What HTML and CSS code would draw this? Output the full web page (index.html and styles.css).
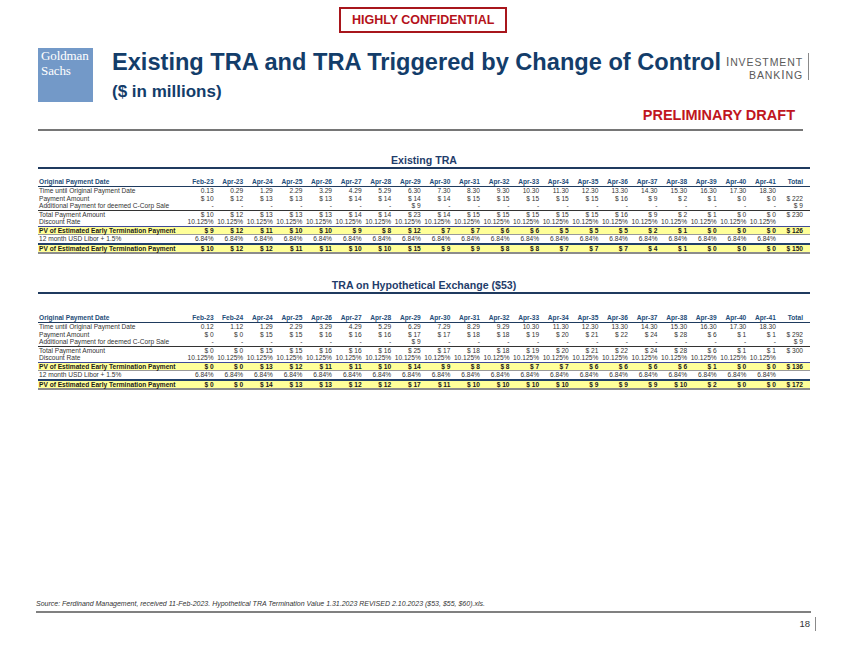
FILE: index.html
```html
<!DOCTYPE html>
<html lang="en">
<head>
<meta charset="utf-8">
<title>Existing TRA and TRA Triggered by Change of Control</title>
<link rel="stylesheet" href="styles.css">
</head>
<body>
<div class="page">
  <div class="conf-row"><div class="conf">HIGHLY CONFIDENTIAL</div></div>
  <header class="header">
    <div class="logo"><span class="logo-text">Goldman<br>Sachs</span></div>
    <div class="titles">
      <h1 class="title">Existing TRA and TRA Triggered by Change of Control</h1>
      <div class="subtitle">($ in millions)</div>
    </div>
    <div class="brand"><div><span class="tall">I</span>NVESTMENT</div><div>BANK<span class="tall">I</span>NG</div></div>
  </header>
  <div class="draft">PRELIMINARY DRAFT</div>
  <div class="rule"></div>

  <section class="sec sec-1">
    <div class="sec-title">Existing TRA</div>
    <table class="tbl">
      <colgroup><col class="c-label"><col span="20" class="c-num"><col class="c-total"></colgroup>
      <thead>
        <tr class="hdr"><th class="lbl">Original Payment Date</th><th>Feb-23</th><th>Apr-23</th><th>Apr-24</th><th>Apr-25</th><th>Apr-26</th><th>Apr-27</th><th>Apr-28</th><th>Apr-29</th><th>Apr-30</th><th>Apr-31</th><th>Apr-32</th><th>Apr-33</th><th>Apr-34</th><th>Apr-35</th><th>Apr-36</th><th>Apr-37</th><th>Apr-38</th><th>Apr-39</th><th>Apr-40</th><th>Apr-41</th><th class="tot">Total</th></tr>
      </thead>
      <tbody>
        <tr><td class="lbl">Time until Original Payment Date</td><td>0.13</td><td>0.29</td><td>1.29</td><td>2.29</td><td>3.29</td><td>4.29</td><td>5.29</td><td>6.30</td><td>7.30</td><td>8.30</td><td>9.30</td><td>10.30</td><td>11.30</td><td>12.30</td><td>13.30</td><td>14.30</td><td>15.30</td><td>16.30</td><td>17.30</td><td>18.30</td><td class="tot"></td></tr>
        <tr><td class="lbl">Payment Amount</td><td>$ 10</td><td>$ 12</td><td>$ 13</td><td>$ 13</td><td>$ 13</td><td>$ 14</td><td>$ 14</td><td>$ 14</td><td>$ 14</td><td>$ 15</td><td>$ 15</td><td>$ 15</td><td>$ 15</td><td>$ 15</td><td>$ 16</td><td>$ 9</td><td>$ 2</td><td>$ 1</td><td>$ 0</td><td>$ 0</td><td class="tot">$ 222</td></tr>
        <tr><td class="lbl">Additional Payment for deemed C-Corp Sale</td><td>-</td><td>-</td><td>-</td><td>-</td><td>-</td><td>-</td><td>-</td><td>$ 9</td><td>-</td><td>-</td><td>-</td><td>-</td><td>-</td><td>-</td><td>-</td><td>-</td><td>-</td><td>-</td><td>-</td><td>-</td><td class="tot">$ 9</td></tr>
        <tr class="r-total"><td class="lbl">Total Payment Amount</td><td>$ 10</td><td>$ 12</td><td>$ 13</td><td>$ 13</td><td>$ 13</td><td>$ 14</td><td>$ 14</td><td>$ 23</td><td>$ 14</td><td>$ 15</td><td>$ 15</td><td>$ 15</td><td>$ 15</td><td>$ 15</td><td>$ 16</td><td>$ 9</td><td>$ 2</td><td>$ 1</td><td>$ 0</td><td>$ 0</td><td class="tot">$ 230</td></tr>
        <tr><td class="lbl">Discount Rate</td><td>10.125%</td><td>10.125%</td><td>10.125%</td><td>10.125%</td><td>10.125%</td><td>10.125%</td><td>10.125%</td><td>10.125%</td><td>10.125%</td><td>10.125%</td><td>10.125%</td><td>10.125%</td><td>10.125%</td><td>10.125%</td><td>10.125%</td><td>10.125%</td><td>10.125%</td><td>10.125%</td><td>10.125%</td><td>10.125%</td><td class="tot"></td></tr>
        <tr class="r-pv"><td class="lbl">PV of Estimated Early Termination Payment</td><td>$ 9</td><td>$ 12</td><td>$ 11</td><td>$ 10</td><td>$ 10</td><td>$ 9</td><td>$ 8</td><td>$ 12</td><td>$ 7</td><td>$ 7</td><td>$ 6</td><td>$ 6</td><td>$ 5</td><td>$ 5</td><td>$ 5</td><td>$ 2</td><td>$ 1</td><td>$ 0</td><td>$ 0</td><td>$ 0</td><td class="tot">$ 126</td></tr>
        <tr class="r-libor"><td class="lbl">12 month USD Libor + 1.5%</td><td>6.84%</td><td>6.84%</td><td>6.84%</td><td>6.84%</td><td>6.84%</td><td>6.84%</td><td>6.84%</td><td>6.84%</td><td>6.84%</td><td>6.84%</td><td>6.84%</td><td>6.84%</td><td>6.84%</td><td>6.84%</td><td>6.84%</td><td>6.84%</td><td>6.84%</td><td>6.84%</td><td>6.84%</td><td>6.84%</td><td class="tot"></td></tr>
        <tr class="r-pv2"><td class="lbl">PV of Estimated Early Termination Payment</td><td>$ 10</td><td>$ 12</td><td>$ 12</td><td>$ 11</td><td>$ 11</td><td>$ 10</td><td>$ 10</td><td>$ 15</td><td>$ 9</td><td>$ 9</td><td>$ 8</td><td>$ 8</td><td>$ 7</td><td>$ 7</td><td>$ 7</td><td>$ 4</td><td>$ 1</td><td>$ 0</td><td>$ 0</td><td>$ 0</td><td class="tot">$ 150</td></tr>
      </tbody>
    </table>
  </section>

  <section class="sec sec-2">
    <div class="sec-title">TRA on Hypothetical Exchange ($53)</div>
    <table class="tbl">
      <colgroup><col class="c-label"><col span="20" class="c-num"><col class="c-total"></colgroup>
      <thead>
        <tr class="hdr"><th class="lbl">Original Payment Date</th><th>Feb-23</th><th>Feb-24</th><th>Apr-24</th><th>Apr-25</th><th>Apr-26</th><th>Apr-27</th><th>Apr-28</th><th>Apr-29</th><th>Apr-30</th><th>Apr-31</th><th>Apr-32</th><th>Apr-33</th><th>Apr-34</th><th>Apr-35</th><th>Apr-36</th><th>Apr-37</th><th>Apr-38</th><th>Apr-39</th><th>Apr-40</th><th>Apr-41</th><th class="tot">Total</th></tr>
      </thead>
      <tbody>
        <tr><td class="lbl">Time until Original Payment Date</td><td>0.12</td><td>1.12</td><td>1.29</td><td>2.29</td><td>3.29</td><td>4.29</td><td>5.29</td><td>6.29</td><td>7.29</td><td>8.29</td><td>9.29</td><td>10.30</td><td>11.30</td><td>12.30</td><td>13.30</td><td>14.30</td><td>15.30</td><td>16.30</td><td>17.30</td><td>18.30</td><td class="tot"></td></tr>
        <tr><td class="lbl">Payment Amount</td><td>$ 0</td><td>$ 0</td><td>$ 15</td><td>$ 15</td><td>$ 16</td><td>$ 16</td><td>$ 16</td><td>$ 17</td><td>$ 17</td><td>$ 18</td><td>$ 18</td><td>$ 19</td><td>$ 20</td><td>$ 21</td><td>$ 22</td><td>$ 24</td><td>$ 28</td><td>$ 6</td><td>$ 1</td><td>$ 1</td><td class="tot">$ 292</td></tr>
        <tr><td class="lbl">Additional Payment for deemed C-Corp Sale</td><td>-</td><td>-</td><td>-</td><td>-</td><td>-</td><td>-</td><td>-</td><td>$ 9</td><td>-</td><td>-</td><td>-</td><td>-</td><td>-</td><td>-</td><td>-</td><td>-</td><td>-</td><td>-</td><td>-</td><td>-</td><td class="tot">$ 9</td></tr>
        <tr class="r-total"><td class="lbl">Total Payment Amount</td><td>$ 0</td><td>$ 0</td><td>$ 15</td><td>$ 15</td><td>$ 16</td><td>$ 16</td><td>$ 16</td><td>$ 25</td><td>$ 17</td><td>$ 18</td><td>$ 18</td><td>$ 19</td><td>$ 20</td><td>$ 21</td><td>$ 22</td><td>$ 24</td><td>$ 28</td><td>$ 6</td><td>$ 1</td><td>$ 1</td><td class="tot">$ 300</td></tr>
        <tr><td class="lbl">Discount Rate</td><td>10.125%</td><td>10.125%</td><td>10.125%</td><td>10.125%</td><td>10.125%</td><td>10.125%</td><td>10.125%</td><td>10.125%</td><td>10.125%</td><td>10.125%</td><td>10.125%</td><td>10.125%</td><td>10.125%</td><td>10.125%</td><td>10.125%</td><td>10.125%</td><td>10.125%</td><td>10.125%</td><td>10.125%</td><td>10.125%</td><td class="tot"></td></tr>
        <tr class="r-pv"><td class="lbl">PV of Estimated Early Termination Payment</td><td>$ 0</td><td>$ 0</td><td>$ 13</td><td>$ 12</td><td>$ 11</td><td>$ 11</td><td>$ 10</td><td>$ 14</td><td>$ 9</td><td>$ 8</td><td>$ 8</td><td>$ 7</td><td>$ 7</td><td>$ 6</td><td>$ 6</td><td>$ 6</td><td>$ 6</td><td>$ 1</td><td>$ 0</td><td>$ 0</td><td class="tot">$ 136</td></tr>
        <tr class="r-libor"><td class="lbl">12 month USD Libor + 1.5%</td><td>6.84%</td><td>6.84%</td><td>6.84%</td><td>6.84%</td><td>6.84%</td><td>6.84%</td><td>6.84%</td><td>6.84%</td><td>6.84%</td><td>6.84%</td><td>6.84%</td><td>6.84%</td><td>6.84%</td><td>6.84%</td><td>6.84%</td><td>6.84%</td><td>6.84%</td><td>6.84%</td><td>6.84%</td><td>6.84%</td><td class="tot"></td></tr>
        <tr class="r-pv2"><td class="lbl">PV of Estimated Early Termination Payment</td><td>$ 0</td><td>$ 0</td><td>$ 14</td><td>$ 13</td><td>$ 13</td><td>$ 12</td><td>$ 12</td><td>$ 17</td><td>$ 11</td><td>$ 10</td><td>$ 10</td><td>$ 10</td><td>$ 10</td><td>$ 9</td><td>$ 9</td><td>$ 9</td><td>$ 10</td><td>$ 2</td><td>$ 0</td><td>$ 0</td><td class="tot">$ 172</td></tr>
      </tbody>
    </table>
  </section>

  <footer class="footer">
    <p class="source">Source: Ferdinand Management, received 11-Feb-2023. Hypothetical TRA Termination Value 1.31.2023 REVISED 2.10.2023 ($53, $55, $60).xls.</p>
    <div class="foot-rule"></div>
    <div class="pagenum-row"><span class="pagenum">18</span></div>
  </footer>
</div>
</body>
</html>
```

FILE: styles.css
```css
* { box-sizing: border-box; }
html, body { margin: 0; padding: 0; background: #ffffff; }
body { font-family: "Liberation Sans", Arial, sans-serif; color: #333333; }

.page {
  width: 850px;
  height: 656px;
  display: flex;
  flex-direction: column;
  padding-top: 7px;
  overflow: hidden;
}

/* confidential badge */
.conf-row { display: flex; padding-left: 339px; }
.conf {
  height: 26px;
  padding: 0 11px;
  border: 2px solid #a8161c;
  color: #b5121b;
  font-weight: bold;
  font-size: 12.5px;
  line-height: 22px;
  white-space: nowrap;
}

/* header */
.header {
  display: flex;
  height: 54px;
  margin-top: 15px;
  padding: 0 41px 0 38px;
}
.logo {
  flex: none;
  width: 55px;
  height: 54px;
  padding: 1px 0 0 3px;
  background: #7399c8;
  color: #ffffff;
  font-family: "Liberation Serif", "Times New Roman", serif;
  font-size: 13px;
  line-height: 14.5px;
  letter-spacing: -0.1px;
}
.logo-text { display: block; }
.titles { flex: 1; min-width: 0; margin-left: 19px; white-space: nowrap; }
.title {
  margin: 3px 0 0;
  font-size: 23.6px;
  line-height: 23.5px;
  font-weight: bold;
  color: #133d6a;
}
.subtitle {
  margin-top: 8px;
  font-size: 17px;
  line-height: 17px;
  font-weight: bold;
  color: #133d6a;
}
.brand {
  flex: none;
  height: 27px;
  margin-top: 5px;
  padding: 3px 5px 0 0;
  border-right: 1px solid #8a8a8a;
  text-align: right;
  font-size: 10.5px;
  line-height: 12.5px;
  letter-spacing: 0.9px;
  color: #5a5a5a;
  white-space: nowrap;
}
.brand .tall { font-size: 12px; }

.draft {
  margin-top: 6px;
  padding-right: 55px;
  text-align: right;
  font-size: 14.5px;
  line-height: 14.5px;
  font-weight: bold;
  color: #c0161e;
}
.rule {
  height: 2px;
  margin: 6px 47px 0 38px;
  background: #767676;
}

/* table sections */
.sec { margin: 23.5px 40px 0 38px; }
.sec-2 { margin-top: 25px; }
.sec-title {
  padding-bottom: 1px;
  border-bottom: 2px solid #1f3a5f;
  text-align: center;
  font-size: 10.6px;
  line-height: 12px;
  font-weight: bold;
  color: #1f3d6b;
}
.tbl {
  width: 772px;
  margin-top: 9px;
  border-collapse: collapse;
  table-layout: fixed;
  font-size: 6.6px;
}
.sec-2 .tbl { margin-top: 20px; }
.c-label { width: 147.5px; }
.c-num { width: 29.6px; }
.c-total { width: 32.5px; }
.tbl th, .tbl td {
  height: 7.5px;
  padding: 0 1.5px;
  line-height: 7.5px;
  text-align: right;
  white-space: nowrap;
  overflow: visible;
}
.tbl th { height: 8px; line-height: 8px; font-weight: bold; color: #1f4e79; }
.tbl .lbl { text-align: left; padding-left: 1px; }
.tbl .tot { padding-right: 7px; }

.hdr { border-bottom: 1.5px solid #1f3b5f; }
.r-total { border-top: 1px solid #333333; }
.r-pv { border-top: 1.5px solid #3f4a9a; border-bottom: 1px solid #9a9a9a; }
.r-pv2 { border-top: 2px solid #22406a; border-bottom: 2px solid #8c8c8c; }
.r-pv td, .r-pv2 td { background: #ffff99; font-weight: bold; color: #1a1a1a; }
.r-pv td.tot:empty, .r-pv2 td.tot:empty { background: transparent; }

/* footer */
.footer { margin-top: auto; padding-bottom: 25px; }
.source {
  margin: 0 0 0 36px;
  font-size: 7px;
  line-height: 9px;
  font-style: italic;
  color: #333333;
}
.foot-rule { height: 2px; margin: 3px 39px 0 36px; background: #808080; }
.pagenum-row { display: flex; justify-content: flex-end; margin-top: 4px; padding-right: 34px; }
.pagenum {
  padding-right: 5px;
  border-right: 1px solid #8a8a8a;
  font-size: 9.5px;
  line-height: 14px;
  color: #333333;
}
```
